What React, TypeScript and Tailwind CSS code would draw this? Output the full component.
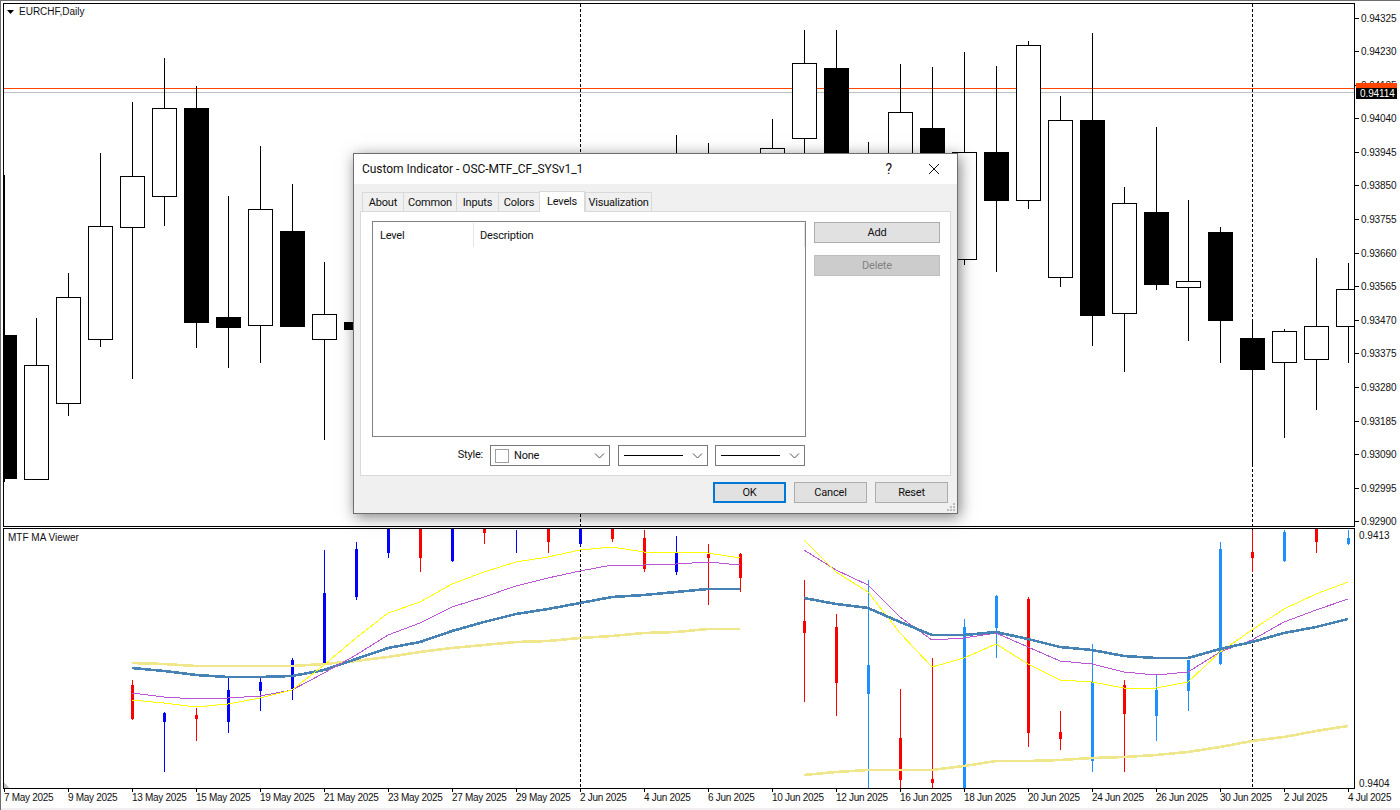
type Candle = [number, number, number, number, number, "w" | "b"];
type Bar = [number, number, number, number, number, "red" | "blue" | "sky"];

const candles: Candle[] = [
  [4, 175, 335, 479, 482, "b"],
  [36, 318, 365, 480, 480, "w"],
  [68, 273, 297, 404, 416, "w"],
  [100, 153, 226, 340, 347, "w"],
  [132, 102, 176, 228, 379, "w"],
  [164, 58, 108, 197, 226, "w"],
  [196, 86, 108, 323, 348, "b"],
  [228, 196, 317, 328, 368, "b"],
  [260, 146, 209, 326, 363, "w"],
  [292, 184, 231, 327, 327, "b"],
  [324, 262, 314, 340, 440, "w"],
  [356, 322, 322, 330, 330, "b"],
  [676, 135, 200, 300, 330, "w"],
  [708, 143, 200, 300, 330, "b"],
  [772, 119, 148, 300, 330, "w"],
  [804, 30, 63, 139, 200, "w"],
  [836, 30, 68, 300, 330, "b"],
  [868, 142, 200, 300, 330, "w"],
  [900, 64, 112, 300, 330, "w"],
  [932, 67, 128, 300, 330, "b"],
  [964, 52, 152, 260, 265, "w"],
  [996, 66, 152, 201, 272, "b"],
  [1028, 41, 45, 201, 209, "w"],
  [1060, 96, 120, 278, 287, "w"],
  [1092, 33, 120, 316, 346, "b"],
  [1124, 187, 203, 314, 372, "w"],
  [1156, 127, 212, 285, 290, "b"],
  [1188, 200, 281, 288, 341, "w"],
  [1220, 227, 232, 321, 363, "b"],
  [1252, 319, 338, 370, 467, "b"],
  [1284, 329, 331, 363, 438, "w"],
  [1316, 258, 326, 360, 410, "w"],
  [1348, 263, 289, 327, 363, "w"],
];

const bars: Bar[] = [
  [132, 680, 685, 719, 720, "red"],
  [164, 712, 713, 722, 772, "blue"],
  [196, 708, 715, 719, 741, "red"],
  [228, 677, 690, 722, 733, "blue"],
  [260, 678, 682, 691, 711, "blue"],
  [292, 658, 660, 689, 700, "blue"],
  [324, 550, 593, 663, 663, "blue"],
  [356, 542, 549, 597, 600, "blue"],
  [388, 529, 529, 553, 558, "blue"],
  [420, 529, 529, 558, 572, "red"],
  [452, 529, 529, 561, 562, "blue"],
  [484, 529, 529, 533, 544, "red"],
  [516, 530, 530, 530, 553, "blue"],
  [548, 529, 529, 542, 553, "red"],
  [580, 529, 529, 544, 546, "blue"],
  [612, 529, 529, 539, 542, "red"],
  [644, 530, 538, 569, 572, "red"],
  [676, 536, 553, 572, 575, "blue"],
  [708, 544, 554, 558, 605, "red"],
  [740, 553, 554, 578, 592, "red"],
  [804, 580, 621, 633, 702, "red"],
  [836, 614, 627, 683, 716, "red"],
  [868, 580, 665, 694, 788, "sky"],
  [900, 689, 738, 780, 788, "red"],
  [932, 658, 779, 783, 788, "red"],
  [964, 619, 627, 788, 788, "sky"],
  [996, 595, 596, 628, 658, "sky"],
  [1028, 597, 599, 733, 747, "red"],
  [1060, 711, 732, 739, 750, "red"],
  [1092, 644, 682, 761, 772, "sky"],
  [1124, 680, 685, 714, 772, "red"],
  [1156, 675, 690, 716, 741, "sky"],
  [1188, 660, 660, 691, 711, "sky"],
  [1220, 542, 549, 664, 665, "sky"],
  [1252, 530, 552, 558, 572, "red"],
  [1284, 530, 532, 561, 562, "sky"],
  [1316, 529, 529, 542, 553, "red"],
  [1348, 530, 538, 544, 545, "sky"],
];

const barColor = { red: "#ff0000", blue: "#0000ff", sky: "#1e90ff" };

const lines = [
  { color: "#f0e68c", width: 2.6, pts: "132,663 164,664 196,666 228,666 260,666 292,666 324,664 356,661 388,657 420,652 452,648 484,645 516,642 548,641 580,638 612,636 644,633 676,632 708,629 740,629" },
  { color: "#4682b4", width: 2.6, pts: "132,668 164,671 196,675 228,677 260,677 292,676 324,670 356,659 388,648 420,642 452,631 484,622 516,614 548,609 580,603 612,597 644,595 676,592 708,589 740,589" },
  { color: "#ba55d3", width: 1, pts: "132,693 164,697 196,699 228,698 260,696 292,690 324,673 356,655 388,635 420,623 452,607 484,597 516,586 548,578 580,571 612,565 644,565 676,564 708,562 740,565" },
  { color: "#ffff00", width: 1, pts: "132,700 164,703 196,707 228,704 260,698 292,690 324,665 356,638 388,613 420,602 452,584 484,572 516,562 548,557 580,550 612,547 644,552 676,552 708,553 740,558" },
  { color: "#f0e68c", width: 2.6, pts: "804,775 836,772 868,770 900,770 932,770 964,766 996,761 1028,761 1060,760 1092,758 1124,757 1156,755 1188,752 1220,747 1252,741 1284,737 1316,731 1348,726" },
  { color: "#ba55d3", width: 1, pts: "804,550 836,570 868,585 900,617 932,640 964,638 996,633 1028,647 1060,661 1092,664 1124,672 1156,675 1188,672 1220,652 1252,640 1284,622 1316,610 1348,599" },
  { color: "#ffff00", width: 1, pts: "804,540 836,572 868,592 900,633 932,667 964,658 996,644 1028,664 1060,680 1092,682 1124,688 1156,688 1188,682 1220,652 1252,630 1284,609 1316,594 1348,582" },
  { color: "#4682b4", width: 2.6, pts: "804,598 836,604 868,608 900,622 932,635 964,635 996,632 1028,639 1060,647 1092,650 1124,656 1156,658 1188,658 1220,649 1252,642 1284,633 1316,627 1348,619" },
];

const prices = ["0.94325", "0.94230", "0.94135", "0.94040", "0.93945", "0.93850", "0.93755", "0.93660", "0.93565", "0.93470", "0.93375", "0.93280", "0.93185", "0.93090", "0.92995", "0.92900"];

const dates = ["7 May 2025", "9 May 2025", "13 May 2025", "15 May 2025", "19 May 2025", "21 May 2025", "23 May 2025", "27 May 2025", "29 May 2025", "2 Jun 2025", "4 Jun 2025", "6 Jun 2025", "10 Jun 2025", "12 Jun 2025", "16 Jun 2025", "18 Jun 2025", "20 Jun 2025", "24 Jun 2025", "26 Jun 2025", "30 Jun 2025", "2 Jul 2025", "4 Jul 2025"];

const tabs = [
  { label: "About", w: "w-[42px]" },
  { label: "Common", w: "w-[54px]" },
  { label: "Inputs", w: "w-[43px]" },
  { label: "Colors", w: "w-[42px]" },
  { label: "Levels", w: "w-[46px]", active: true },
  { label: "Visualization", w: "w-[67px]" },
];

function Chevron() {
  return (
    <svg width="11" height="6" viewBox="0 0 11 6" className="shrink-0" fill="none" stroke="#505050">
      <path d="M1 0.5 L5.5 5 L10 0.5" />
    </svg>
  );
}

function LineSelect({ width }: { width: string }) {
  return (
    <div className={`${width} h-[21px] flex items-center justify-between bg-white border border-[#7a7a7a] pl-[5px] pr-[4px]`}>
      <div className="w-[59px] h-px bg-black" />
      <Chevron />
    </div>
  );
}

function DlgButton({ label, primary }: { label: string; primary?: boolean }) {
  return (
    <div
      className={`w-[73px] h-[21px] pt-[2px] flex items-center justify-center bg-[#e1e1e1] ${
        primary ? "border-2 border-[#0078d7]" : "border border-[#adadad]"
      }`}
    >
      {label}
    </div>
  );
}

function Dialog() {
  return (
    <div className="absolute left-[352px] top-[152px] w-[605px] h-[361px] flex flex-col bg-[#f0f0f0] border border-[#6e6e6e] shadow-[2px_3px_14px_rgba(0,0,0,0.5)] text-[11px] tracking-[-0.2px] text-[#111] font-['Roboto','Liberation_Sans',sans-serif]">
      <div className="h-[30px] shrink-0 bg-white flex items-center pl-[8px] pr-[17px]">
        <span className="text-[12px] tracking-[-0.05px]">Custom Indicator - OSC-MTF_CF_SYSv1_1</span>
        <span className="ml-auto mr-[36px] text-[14px]">?</span>
        <svg width="12" height="12" viewBox="0 0 12 12" stroke="#111" fill="none">
          <path d="M1 1 L11 11 M11 1 L1 11" />
        </svg>
      </div>

      <div className="flex items-end h-[27px] pl-[8px] shrink-0">
        {tabs.map((t) =>
          t.active ? (
            <div key={t.label} className={`${t.w} h-[21px] -mb-px z-10 flex items-center justify-center bg-white border border-b-0 border-[#d9d9d9]`}>
              {t.label}
            </div>
          ) : (
            <div key={t.label} className={`${t.w} h-[19px] pt-[2px] flex items-center justify-center bg-[#f0f0f0] border border-b-0 border-[#d9d9d9] -mr-px`}>
              {t.label}
            </div>
          )
        )}
      </div>

      <div className="mx-[6px] h-[265px] bg-white border border-[#d9d9d9] flex flex-col pt-[9px] pl-[11px] pr-[10px]">
        <div className="flex gap-[8px]">
          <div className="w-[434px] h-[216px] border border-[#828282] bg-white">
            <div className="flex h-[24px] items-center mt-px">
              <div className="w-[101px] h-full pt-[2px] flex items-center pl-[7px] border-r border-[#e5e5e5]">Level</div>
              <div className="flex-1 h-full pt-[2px] flex items-center pl-[6px] border-r border-[#e5e5e5]">Description</div>
            </div>
          </div>
          <div className="flex flex-col gap-[12px] pt-px">
            <div className="w-[126px] h-[21px] pt-[2px] flex items-center justify-center bg-[#e1e1e1] border border-[#adadad]">Add</div>
            <div className="w-[126px] h-[21px] pt-[2px] flex items-center justify-center bg-[#cccccc] border border-[#bfbfbf] text-[#838383]">Delete</div>
          </div>
        </div>
        <div className="flex items-center mt-[8px] w-[435px]">
          <span className="w-[118px] pr-[7px] text-right">Style:</span>
          <div className="w-[120px] h-[21px] flex items-center bg-white border border-[#7a7a7a] pl-[4px] pr-[4px] mr-[8px]">
            <div className="w-[14px] h-[14px] border border-[#a0a0a0] mr-[5px]" />
            <span className="pt-[2px]">None</span>
            <div className="ml-auto">
              <Chevron />
            </div>
          </div>
          <div className="mr-[7px]">
            <LineSelect width="w-[90px]" />
          </div>
          <LineSelect width="w-[90px]" />
        </div>
      </div>

      <div className="flex justify-end gap-[8px] pt-[6px] pr-[9px]">
        <DlgButton label="OK" primary />
        <DlgButton label="Cancel" />
        <DlgButton label="Reset" />
      </div>

      <svg className="absolute right-[2px] bottom-[2px]" width="9" height="9" viewBox="0 0 9 9" fill="#bdbdbd">
        <rect x="7" y="1" width="2" height="2" />
        <rect x="4" y="4" width="2" height="2" />
        <rect x="7" y="4" width="2" height="2" />
        <rect x="1" y="7" width="2" height="2" />
        <rect x="4" y="7" width="2" height="2" />
        <rect x="7" y="7" width="2" height="2" />
      </svg>
    </div>
  );
}

export default function App() {
  return (
    <div className="relative w-[1400px] h-[810px] overflow-hidden bg-white border-t border-l border-[#6e6e6e] font-['Liberation_Sans',sans-serif] text-[10px] text-[#111]">
      <div className="pl-[2px] pt-[2px]">
        {/* main chart + price scale */}
        <div className="flex h-[524px]">
          <div className="relative w-[1352px] h-[524px] border border-black shrink-0">
            <svg width="1350" height="522" viewBox="4 4 1350 522" className="block" shapeRendering="crispEdges">
              <line x1="4" x2="1354" y1="88.5" y2="88.5" stroke="#ff4500" />
              <line x1="4" x2="1354" y1="92.5" y2="92.5" stroke="#c0c0c0" />
              <line x1="580.5" x2="580.5" y1="4" y2="526" stroke="#000" strokeDasharray="3 2" />
              <line x1="1252.5" x2="1252.5" y1="4" y2="526" stroke="#000" strokeDasharray="3 2" />
              {candles.map(([x, wt, t, b, wb, kind]) => (
                <g key={x}>
                  <line x1={x + 0.5} x2={x + 0.5} y1={wt} y2={wb} stroke="#000" />
                  {kind === "w" ? (
                    <rect x={x - 11.5} y={t + 0.5} width={24} height={b - t - 1} fill="#fff" stroke="#000" />
                  ) : (
                    <rect x={x - 12} y={t} width={25} height={b - t} fill="#000" />
                  )}
                </g>
              ))}
            </svg>
            <div className="absolute left-[3px] top-[2px] flex items-center gap-[5px]">
              <svg width="7" height="4" viewBox="0 0 7 4" fill="#000">
                <path d="M0 0 H7 L3.5 4 Z" />
              </svg>
              <span className="text-[10px] leading-[12px]">EURCHF,Daily</span>
            </div>
          </div>
          <div className="flex flex-col justify-between h-[516px] mt-[9px] tracking-[-0.1px]">
            {prices.map((p) => (
              <div key={p} className="flex items-center h-[12px] gap-[2px]">
                <div className="w-[4px] h-px bg-black" />
                <span>{p}</span>
              </div>
            ))}
          </div>
        </div>

        {/* indicator window + its scale */}
        <div className="flex h-[261px] mt-px">
          <div className="relative w-[1352px] h-[261px] border border-black shrink-0">
            <svg width="1350" height="259" viewBox="4 529 1350 259" className="block" shapeRendering="crispEdges">
              <line x1="580.5" x2="580.5" y1="529" y2="788" stroke="#000" strokeDasharray="3 2" />
              <line x1="1252.5" x2="1252.5" y1="529" y2="788" stroke="#000" strokeDasharray="3 2" />
              {bars.map(([x, wt, t, b, wb, c]) => (
                <g key={x}>
                  <line x1={x + 0.5} x2={x + 0.5} y1={wt} y2={wb} stroke={barColor[c]} />
                  {b > t && <rect x={x - 1} y={t} width={3} height={b - t} fill={barColor[c]} />}
                </g>
              ))}
              {lines.map((l, i) => (
                <polyline key={i} points={l.pts} fill="none" stroke={l.color} strokeWidth={l.width} />
              ))}
              <path d="M4 783 L9 788 H4 Z" fill="#c0c0c0" />
            </svg>
            <div className="absolute left-[4px] top-[3px] text-[10px] leading-[12px]">MTF MA Viewer</div>
          </div>
          <div className="flex flex-col justify-between h-[259px] pl-[4px] mt-[2px]">
            <span className="leading-[12px]">0.9413</span>
            <span className="leading-[12px] -mb-px">0.9404</span>
          </div>
        </div>

        {/* time scale */}
        <div className="flex h-[19px] pl-px tracking-[-0.3px]">
          {dates.map((d) => (
            <div key={d} className="w-[64px] shrink-0 flex flex-col whitespace-nowrap">
              <div className="w-px h-[3px] bg-black" />
              <span className="leading-[12px]">{d}</span>
            </div>
          ))}
        </div>
      </div>

      {/* current price tags */}
      <div className="absolute left-[1355px] top-[82px] w-[41px] h-[5px] bg-[#ff4500]" />
      <div className="absolute left-[1355px] top-[87px] w-[41px] h-[11px] bg-black text-white flex items-center pl-[4px] tracking-[-0.1px]">0.94114</div>

      <div className="absolute left-0 bottom-0 w-full h-[2px] bg-[#f0f0f0]" />

      <Dialog />
    </div>
  );
}
